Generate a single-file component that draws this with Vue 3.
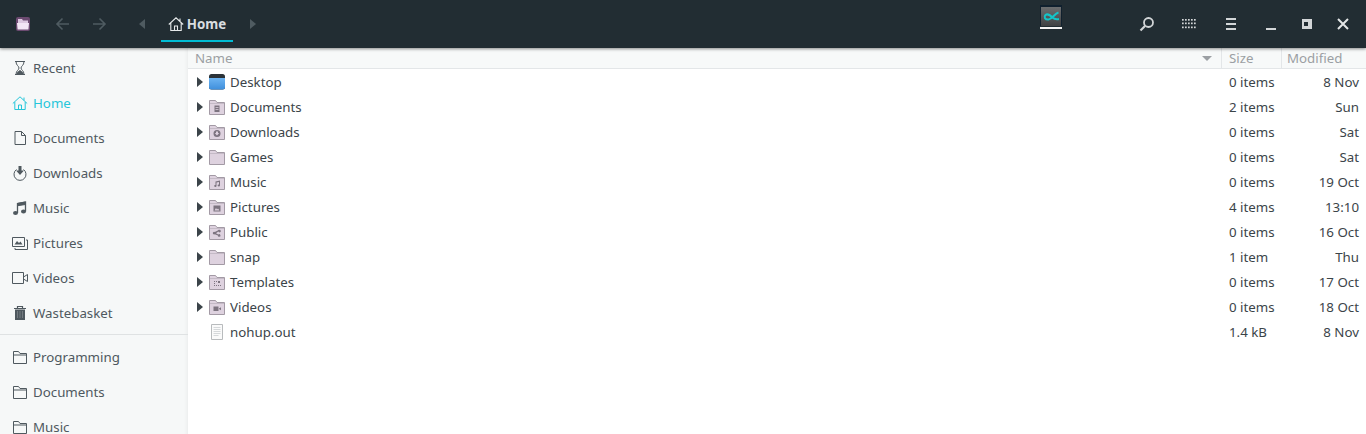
<script setup>
const places = [
  { name: 'Recent', icon: 'recent' },
  { name: 'Home', icon: 'home', active: true },
  { name: 'Documents', icon: 'doc' },
  { name: 'Downloads', icon: 'download' },
  { name: 'Music', icon: 'music' },
  { name: 'Pictures', icon: 'pictures' },
  { name: 'Videos', icon: 'videos' },
  { name: 'Wastebasket', icon: 'trash' }
]
const bookmarks = ['Programming', 'Documents', 'Music']

const files = [
  { name: 'Desktop', kind: 'desktop', size: '0 items', date: '8 Nov' },
  { name: 'Documents', kind: 'documents', size: '2 items', date: 'Sun' },
  { name: 'Downloads', kind: 'downloads', size: '0 items', date: 'Sat' },
  { name: 'Games', kind: 'plain', size: '0 items', date: 'Sat' },
  { name: 'Music', kind: 'music', size: '0 items', date: '19 Oct' },
  { name: 'Pictures', kind: 'pictures', size: '4 items', date: '13:10' },
  { name: 'Public', kind: 'public', size: '0 items', date: '16 Oct' },
  { name: 'snap', kind: 'plain', size: '1 item', date: 'Thu' },
  { name: 'Templates', kind: 'templates', size: '0 items', date: '17 Oct' },
  { name: 'Videos', kind: 'videos', size: '0 items', date: '18 Oct' },
  { name: 'nohup.out', kind: 'file', size: '1.4 kB', date: '8 Nov' }
]
</script>

<template>
  <div class="window">
    <header class="topbar">
      <div class="left">
        <svg class="app-icon" width="16" height="16" viewBox="0 0 16 16">
          <rect x="1" y="1" width="14" height="14" rx="2" fill="#6b4a70" />
          <path d="M3 3h4l1 1.500h5V7H3z" fill="#dcc8e0" />
          <path d="M2 7h12l-.6 6.500H2.600z" fill="#f3e6f5" />
        </svg>
        <svg class="nav" width="16" height="16" viewBox="0 0 16 16" fill="none" stroke="#4f5b61" stroke-width="1.600">
          <path d="M14 8H2.500M7.500 2.500 2 8l5.500 5.500" />
        </svg>
        <svg class="nav" width="16" height="16" viewBox="0 0 16 16" fill="none" stroke="#4f5b61" stroke-width="1.600">
          <path d="M2 8h11.500M8.500 2.500 14 8l-5.500 5.500" />
        </svg>
        <span class="tri tri-left"></span>
        <div class="crumb">
          <svg width="16" height="16" viewBox="0 0 16 16" fill="none" stroke="#e6e9ea" stroke-width="1.100">
            <path d="M.8 8.500 8 1.800l7.200 6.700M2.800 7v7.500h10.400V7M6.500 14.500V10h3v4.500M12 2.500v3" />
          </svg>
          <span>Home</span>
        </div>
        <span class="tri tri-right"></span>
      </div>

      <div class="tray">
        <svg width="22" height="24" viewBox="0 0 22 24">
          <defs>
            <linearGradient id="trayGrey" x1="0" y1="0" x2="0" y2="1">
              <stop offset="0" stop-color="#6c6e70" />
              <stop offset="1" stop-color="#3f4143" />
            </linearGradient>
          </defs>
          <rect width="22" height="21" fill="#10202e" />
          <rect x="1" y="2" width="20" height="19" fill="url(#trayGrey)" />
          <path d="M18.500 7.500c-4 1-6 6.500-10 7-3.500.3-5-2.500-3-4.500 2.500-2 5 .5 7 2.500 1.500 1.500 4 2 6.500 1.500" fill="none" stroke="#14c4c8" stroke-width="2" />
          <rect y="22" width="22" height="2" fill="#f4f4f4" />
        </svg>
      </div>

      <div class="actions">
        <svg class="a-search" width="16" height="16" viewBox="0 0 16 16" fill="none" stroke="#d3d6d8" stroke-width="1.800">
          <circle cx="9.500" cy="6.500" r="4.500" />
          <path d="M6 10 1.500 14.500" stroke-width="2.200" />
        </svg>
        <svg class="a-grid" width="16" height="16" viewBox="0 0 16 16" fill="#d3d6d8">
          <g v-for="y in [3, 6.500, 10.500]" :key="y">
            <rect v-for="x in [1, 4, 7, 10, 13]" :key="x" :x="x" :y="y" width="1.700" height="1.700" />
          </g>
        </svg>
        <svg class="a-menu" width="16" height="16" viewBox="0 0 16 16" fill="#d3d6d8">
          <rect x="3" y="2" width="10" height="2" />
          <rect x="3" y="7" width="10" height="2" />
          <rect x="3" y="12" width="10" height="2" />
        </svg>
        <svg class="a-min" width="16" height="16" viewBox="0 0 16 16" fill="#d3d6d8">
          <rect x="3" y="12" width="10" height="2" />
        </svg>
        <svg class="a-max" width="16" height="16" viewBox="0 0 16 16">
          <rect x="3" y="3" width="10" height="10" fill="#d3d6d8" />
          <rect x="5" y="6" width="4" height="4" fill="#222d33" />
        </svg>
        <svg class="a-close" width="16" height="16" viewBox="0 0 16 16" stroke="#e3e5e6" stroke-width="2" fill="none">
          <path d="m3 3 10 10M13 3 3 13" />
        </svg>
      </div>
    </header>

    <div class="body">
      <aside class="sidebar">
        <div class="group">
          <div v-for="p in places" :key="p.name" :class="['place', { active: p.active }]">
            <svg class="place-icon" width="16" height="16" viewBox="0 0 16 16" fill="none" stroke="currentColor" stroke-width="1">
              <template v-if="p.icon === 'recent'">
                <path d="M3 1.500h10M3 14.500h10M4 1.500c0 4 3 4.500 3 6.500s-3 2.500-3 6.500M12 1.500c0 4-3 4.500-3 6.500s3 2.500 3 6.500" />
                <path d="M5 13.500c1-2 2-2.500 3-3 1 .5 2 1 3 3z" fill="currentColor" />
              </template>
              <path v-else-if="p.icon === 'home'" d="M.8 8.500 8 1.800l7.200 6.700M2.800 7v7.500h10.400V7M6.500 14.500V10h3v4.500M12 2.500v3" />
              <path v-else-if="p.icon === 'doc'" d="M3 1.500h6.500L13.500 5.500v9H3zM9.500 1.500v4h4" />
              <template v-else-if="p.icon === 'download'">
                <path d="M4.500 4.500a6 6 0 1 0 7 0" />
                <path d="M6.500 1h3v4.500H12L8 10 4 5.500h2.500z" fill="currentColor" stroke="none" />
              </template>
              <template v-else-if="p.icon === 'music'">
                <ellipse cx="3.500" cy="13" rx="2.500" ry="2" fill="currentColor" stroke="none" />
                <ellipse cx="11.500" cy="11.500" rx="2.500" ry="2" fill="currentColor" stroke="none" />
                <path d="M5.500 13V3.500L13.500 2v9.500" stroke-width="1.300" />
                <path d="M5.500 3.500 13.500 2v2.500l-8 1.200z" fill="currentColor" />
              </template>
              <template v-else-if="p.icon === 'pictures'">
                <path d="M.5 2.500h12v9H.5zM14 5h1.500v9.500H3V13" />
                <path d="M2.500 9.500 5 6l2 2 1.500-1.500 2 3z" fill="currentColor" stroke="none" />
              </template>
              <path v-else-if="p.icon === 'videos'" d="M.5 2.500h11v11H.5zM11.500 7l4-2.500v7l-4-2.500" />
              <template v-else-if="p.icon === 'trash'">
                <path d="M2 3.500h12M5.500 3V1.500h5V3" stroke-width="1.200" />
                <path d="M3 4.500h10v10.500H3z" fill="currentColor" stroke="none" />
                <path d="M5.500 6v7M8 6v7M10.500 6v7" stroke="#8d9498" stroke-width=".6" />
              </template>
            </svg>
            <span>{{ p.name }}</span>
          </div>
        </div>
        <div class="group bookmarks">
          <div v-for="b in bookmarks" :key="b" class="place">
            <svg class="place-icon" width="16" height="16" viewBox="0 0 16 16" fill="none" stroke="currentColor" stroke-width="1">
              <path d="M1.500 14.500v-12h5l1.500 2h6.500v10zM1.500 6h13" />
            </svg>
            <span>{{ b }}</span>
          </div>
        </div>
      </aside>

      <main class="files">
        <div class="head">
          <div class="h-name">
            <span>Name</span>
            <span class="sort"></span>
          </div>
          <div class="h-size">Size</div>
          <div class="h-date">Modified</div>
        </div>

        <div v-for="f in files" :key="f.name" class="row">
          <div class="c-name">
            <span :class="['arrow', { hidden: f.kind === 'file' }]"></span>
            <svg v-if="f.kind === 'desktop'" class="ficon" width="16" height="16" viewBox="0 0 16 16">
              <defs>
                <linearGradient id="deskBlue" x1="0" y1="0" x2="0" y2="1">
                  <stop offset="0" stop-color="#6db4f2" />
                  <stop offset="1" stop-color="#3f8fdc" />
                </linearGradient>
              </defs>
              <rect x="0" y="0" width="16" height="15.500" rx="2.500" fill="#2b3238" />
              <path d="M0 4h16v9a2.500 2.500 0 0 1-2.500 2.500h-11A2.500 2.500 0 0 1 0 13z" fill="url(#deskBlue)" />
            </svg>
            <svg v-else-if="f.kind === 'file'" class="ficon" width="16" height="16" viewBox="0 0 16 16" fill="none">
              <path d="M2.500 .5h11v15h-11z" fill="#fafafa" stroke="#b8bbbd" />
              <path d="M4.500 3.500h7M4.500 5.500h7M4.500 7.500h7M4.500 9.500h7M4.500 11.500h5" stroke="#d5d8da" />
            </svg>
            <svg v-else class="ficon" width="16" height="16" viewBox="0 0 16 16">
              <path d="M.5 15.500V1.500h6l1.500 2h7.500v12z" fill="#ded2df" stroke="#a39aa5" />
              <path d="M1 4.500h14" stroke="#c4bac6" />
              <g v-if="f.kind !== 'plain'" class="emblem" stroke="none">
                <path v-if="f.kind === 'documents'" d="M5.500 6.500h5v6.500h-5zM6.500 8v.8h3V8zM6.500 10v.8h3V10z" fill-rule="evenodd" />
                <path v-else-if="f.kind === 'downloads'" d="M8 6a3.500 3.500 0 1 0 0 7 3.500 3.500 0 0 0 0-7zM7 7.500h2v1.500h1.200L8 11.500 5.800 9H7z" fill-rule="evenodd" />
                <path v-else-if="f.kind === 'music'" d="M6.500 7.500 11 6.500v5a1.200 1 0 1 1-1-1v-2.500l-2.500.5v3.500a1.200 1 0 1 1-1-1z" />
                <path v-else-if="f.kind === 'pictures'" d="M4.500 6.500h7v6h-7zM5.500 11.500h5L9 9.500l-1 1-1-1.500z" fill-rule="evenodd" />
                <path v-else-if="f.kind === 'public'" d="M10.500 5.800a1.300 1.300 0 1 1-1.200 1.800L7 9.200l2.300 1.400a1.300 1.300 0 1 1-.4.800L5.800 10.300a1.300 1.300 0 1 1 0-2.200l3-1.700a1.300 1.300 0 0 1 1.700-.6z" />
                <path v-else-if="f.kind === 'templates'" d="M5 7h1v1H5zm2 0h1v1H7zm2 0h2v2H9zM5 9h1v1H5zm0 2h1v1H5zm2 0h1v1H7zm2 0h1v1H9zm2 0h1v1h-1z" />
                <path v-else-if="f.kind === 'videos'" d="M4.500 7.500h5v4.500h-5zM10 9.500l2-1.300v3L10 10z" />
              </g>
            </svg>
            <span class="fname">{{ f.name }}</span>
          </div>
          <div class="c-size">{{ f.size }}</div>
          <div class="c-date">{{ f.date }}</div>
        </div>
      </main>
    </div>
  </div>
</template>

<style>
html, body {
  margin: 0;
  overflow: hidden;
}
</style>

<style scoped>
.window {
  width: 1366px;
  height: 434px;
  display: flex;
  flex-direction: column;
  overflow: hidden;
  background: #fff;
  font-family: "Noto Sans", "Open Sans", sans-serif;
  font-size: 13.3px;
  color: #3b4449;
}

.topbar {
  height: 48px;
  flex-shrink: 0;
  display: flex;
  align-items: center;
  background: #222d33;
  box-shadow: 0 1px 3px rgba(0, 0, 0, 0.45);
  position: relative;
  z-index: 2;
}

.left {
  display: flex;
  align-items: center;
  width: 1040px;
  height: 100%;
  padding-left: 15px;
  box-sizing: border-box;
}

.app-icon {
  margin-right: 24px;
}

.nav {
  margin-right: 20px;
}

.tri {
  width: 0;
  height: 0;
  border-top: 5px solid transparent;
  border-bottom: 5px solid transparent;
}

.tri-left {
  border-right: 6px solid #4f5b61;
  margin-left: 12px;
  margin-right: 16px;
}

.tri-right {
  border-left: 6px solid #4f5b61;
  margin-left: 17px;
}

.crumb {
  width: 72px;
  height: 100%;
  display: flex;
  align-items: center;
  justify-content: center;
  gap: 3px;
  position: relative;
  color: #d9dde0;
  font-weight: 700;
  font-size: 13.3px;
}

.crumb::after {
  content: "";
  position: absolute;
  left: 0;
  right: 0;
  bottom: 6px;
  height: 2px;
  background: #00bcd4;
}

.tray {
  width: 22px;
  height: 100%;
  padding-top: 5px;
  box-sizing: border-box;
}

.actions {
  margin-left: auto;
  display: flex;
  align-items: center;
  padding-right: 15px;
  margin-top: -1px;
}

.actions svg {
  margin-left: 20px;
}

.actions .a-grid,
.actions .a-menu {
  margin-left: 26px;
}

.actions .a-min {
  margin-left: 24px;
}

.emblem {
  fill: #7d7480;
}

.body {
  flex: 1;
  display: flex;
  min-height: 0;
}

.sidebar {
  width: 188px;
  flex-shrink: 0;
  background: #f6f8f8;
  box-shadow: inset -6px 0 5px -6px rgba(0, 0, 0, 0.08);
  padding-top: 2px;
  overflow: hidden;
}

.bookmarks {
  border-top: 1px solid #dfe2e3;
  margin-top: 4px;
  padding-top: 4px;
}

.place {
  height: 35px;
  display: flex;
  align-items: center;
  gap: 5px;
  padding-left: 12px;
  color: #4f595f;
}

.place span {
  line-height: 14px;
}

.place.active {
  color: #26c6da;
}

.place-icon {
  flex-shrink: 0;
}

.files {
  flex: 1;
  min-width: 0;
}

.head {
  height: 20px;
  display: flex;
  border-bottom: 1px solid #e3e6e8;
  background: #f7f9f9;
  color: #9b9fa3;
  line-height: 20px;
}

.h-name {
  width: 1033px;
  padding: 0 9px 0 7px;
  box-sizing: border-box;
  display: flex;
  align-items: center;
  justify-content: space-between;
}

.sort {
  width: 0;
  height: 0;
  border-left: 5px solid transparent;
  border-right: 5px solid transparent;
  border-top: 5px solid #9b9fa3;
}

.h-size {
  width: 60px;
  padding-left: 7px;
  box-sizing: border-box;
  border-left: 1px solid #e3e6e8;
}

.h-date {
  flex: 1;
  padding-left: 5px;
  border-left: 1px solid #e3e6e8;
}

.row {
  height: 25px;
  display: flex;
  align-items: center;
}

.c-name {
  width: 1033px;
  display: flex;
  align-items: center;
  padding-left: 9px;
  box-sizing: border-box;
}

.arrow {
  width: 0;
  height: 0;
  border-top: 5px solid transparent;
  border-bottom: 5px solid transparent;
  border-left: 6px solid #3b4449;
  margin-right: 6px;
}

.arrow.hidden {
  visibility: hidden;
}

.ficon {
  margin-right: 5px;
  flex-shrink: 0;
}

.c-size {
  width: 60px;
  padding-left: 8px;
  box-sizing: border-box;
}

.c-date {
  width: 78px;
  text-align: right;
}
</style>
